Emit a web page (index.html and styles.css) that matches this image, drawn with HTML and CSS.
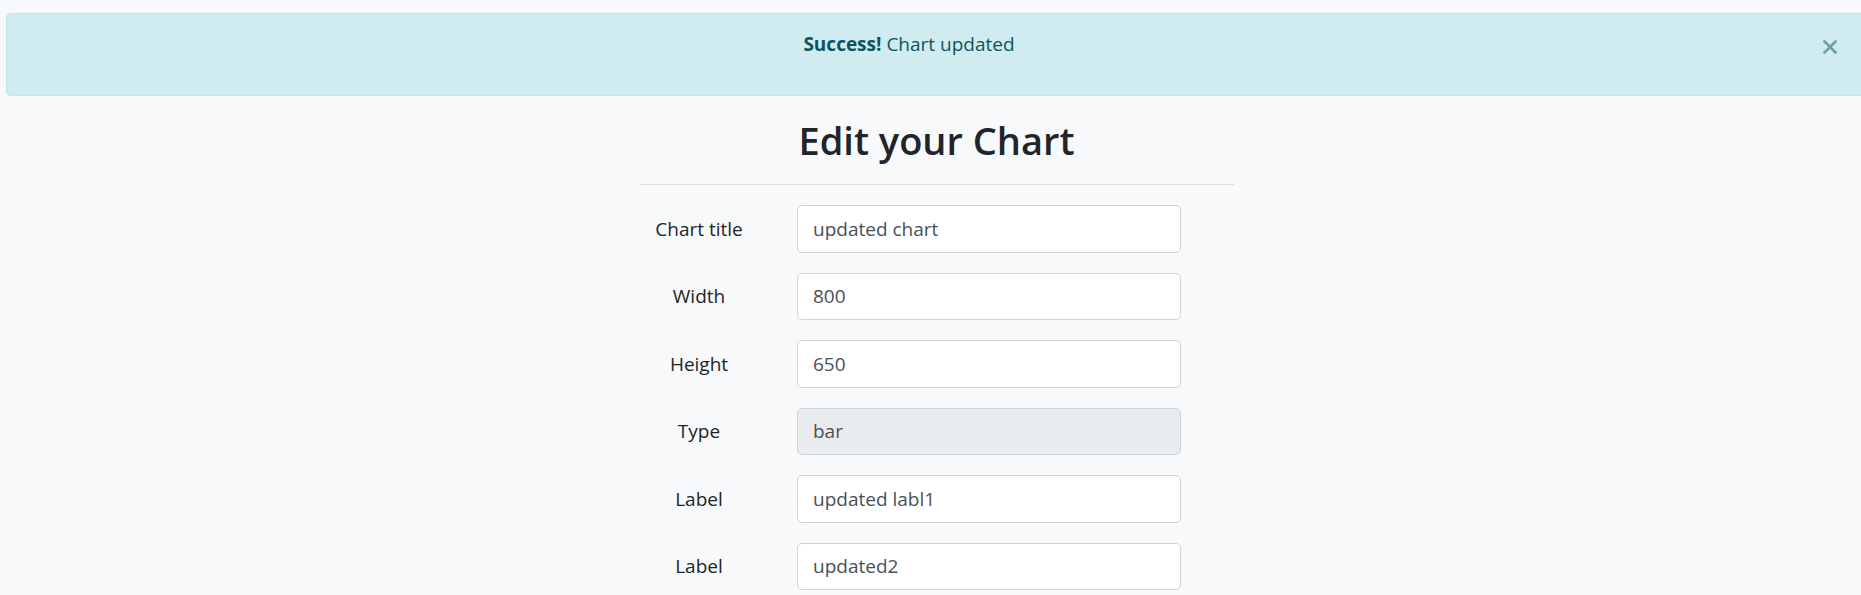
FILE: index.html
```html
<!DOCTYPE html>
<html lang="en">
<head>
<meta charset="utf-8">
<title>Edit your Chart</title>
<link rel="stylesheet" href="styles.css">
</head>
<body>
<div class="page">
  <div class="alert" role="alert">
    <p class="alert-text"><strong>Success!</strong> Chart updated</p>
    <button class="close" type="button" aria-label="Close">
      <svg width="14" height="14" viewBox="0 0 14 14" aria-hidden="true"><path d="M1.5 1.5 L12.5 12.5 M12.5 1.5 L1.5 12.5" stroke="currentColor" stroke-width="2.6" stroke-linecap="square"/></svg>
    </button>
  </div>
  <main class="main">
    <h2 class="title">Edit your Chart</h2>
    <hr class="rule">
    <form class="form">
      <div class="row"><label class="lbl">Chart title</label><input class="field" type="text" value="updated chart"></div>
      <div class="row"><label class="lbl">Width</label><input class="field" type="text" value="800"></div>
      <div class="row"><label class="lbl">Height</label><input class="field" type="text" value="650"></div>
      <div class="row"><label class="lbl">Type</label><input class="field" type="text" value="bar" disabled></div>
      <div class="row"><label class="lbl">Label</label><input class="field" type="text" value="updated labl1"></div>
      <div class="row"><label class="lbl">Label</label><input class="field" type="text" value="updated2"></div>
    </form>
  </main>
</div>
</body>
</html>
```
FILE: styles.css
```css
html, body {
  margin: 0;
  padding: 0;
  background: #f8f9fa;
  overflow: hidden;
}
body {
  font-family: "Open Sans", "Noto Sans", "Liberation Sans", sans-serif;
  color: #212529;
  font-size: 20px;
}
.page {
  width: 1873px;
  padding-top: 13px;
}
.alert {
  position: relative;
  margin: 0 6px 20px;
  padding: 15px 80px 15px 25px;
  background: #d1ecf1;
  border: 1px solid #bee5eb;
  border-radius: 5px;
  color: #0c5460;
  text-align: center;
}
.alert-text {
  margin: 0 0 21px;
  font-size: 19px;
  line-height: 30px;
}
.alert-text strong {
  font-weight: 700;
}
.close {
  position: absolute;
  top: 0;
  right: 0;
  padding: 26px 29px 0 0;
  background: none;
  border: 0;
  color: #0c5460;
  opacity: 0.5;
  line-height: 0;
  cursor: pointer;
}
.main {
  width: 595px;
  margin: 0 auto;
}
.title {
  margin: 0 0 20px;
  font-size: 38px;
  line-height: 48px;
  font-weight: 600;
  text-align: center;
  color: #212529;
}
.rule {
  margin: 0 0 20px;
  border: 0;
  border-top: 1px solid #dcdfe2;
  height: 0;
}
.form {
  display: flex;
  flex-direction: column;
  gap: 20px;
}
.row {
  display: flex;
  align-items: center;
}
.lbl {
  width: 120px;
  margin-right: 38px;
  text-align: center;
  font-size: 19px;
  line-height: 30px;
  color: #212529;
}
.field {
  box-sizing: border-box;
  width: 384px;
  height: 47.5px;
  padding: 0 15px;
  border: 1px solid #ced4da;
  border-radius: 5px;
  background: #fff;
  font-family: inherit;
  font-size: 19px;
  color: #495057;
  outline: none;
}
.field:disabled {
  background: #e9ecef;
  color: #495057;
  opacity: 1;
}
```
